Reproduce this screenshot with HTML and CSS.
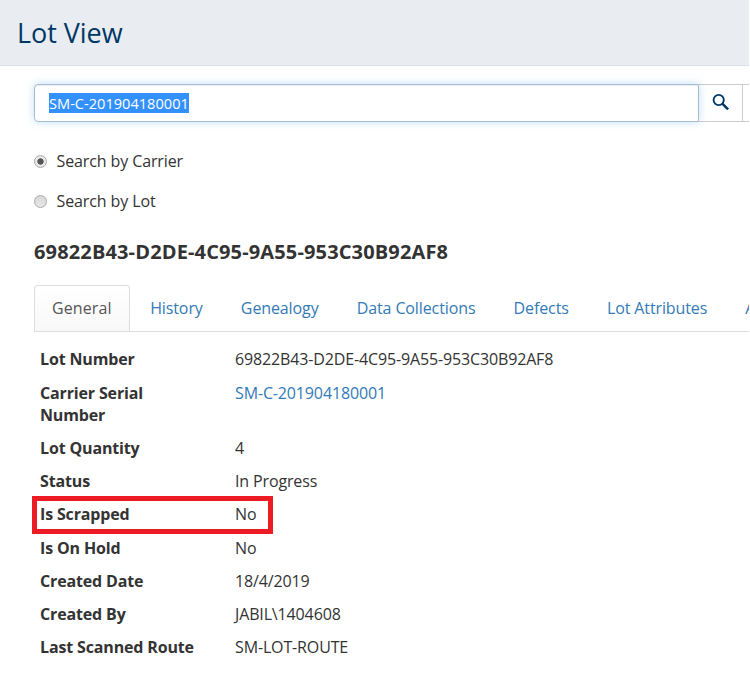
FILE: index.html
```
<!DOCTYPE html>
<html lang="en">
<head>
<meta charset="utf-8">
<title>Lot View</title>
<link rel="stylesheet" href="styles.css">
</head>
<body>
<header class="page-header"><h1>Lot View</h1></header>
<main class="content">
  <div class="search">
    <div class="search-input"><span class="selected">SM-C-201904180001</span></div>
    <button class="search-button" aria-label="Search"><svg width="18" height="18" viewBox="0 0 18 18"><circle cx="6.7" cy="7" r="5.1" fill="none" stroke="#003865" stroke-width="1.9"/><path d="M10.3 10.6 16.1 16.4" stroke="#003865" stroke-width="2.5"/></svg></button>
    <div class="search-next"></div>
  </div>
  <div class="options">
    <label class="option"><span class="radio checked"></span>Search by Carrier</label>
    <label class="option"><span class="radio"></span>Search by Lot</label>
  </div>
  <h2 class="lot-title">69822B43-D2DE-4C95-9A55-953C30B92AF8</h2>
  <nav class="tabs">
    <a class="tab active">General</a>
    <a class="tab">History</a>
    <a class="tab">Genealogy</a>
    <a class="tab">Data Collections</a>
    <a class="tab">Defects</a>
    <a class="tab">Lot Attributes</a>
    <a class="tab">A</a>
  </nav>
  <dl class="details">
    <div class="row"><dt>Lot Number</dt><dd>69822B43-D2DE-4C95-9A55-953C30B92AF8</dd></div>
    <div class="row tall"><dt>Carrier Serial Number</dt><dd class="link">SM-C-201904180001</dd></div>
    <div class="row"><dt>Lot Quantity</dt><dd>4</dd></div>
    <div class="row"><dt>Status</dt><dd>In Progress</dd></div>
    <div class="row marked"><dt>Is Scrapped</dt><dd>No</dd></div>
    <div class="row"><dt>Is On Hold</dt><dd>No</dd></div>
    <div class="row"><dt>Created Date</dt><dd>18/4/2019</dd></div>
    <div class="row"><dt>Created By</dt><dd>JABIL\1404608</dd></div>
    <div class="row"><dt>Last Scanned Route</dt><dd>SM-LOT-ROUTE</dd></div>
  </dl>
</main>
</body>
</html>
```
FILE: styles.css
```
*, *::before { box-sizing: border-box; }
html { background: #fff; }
body { margin: 0; width: 749px; height: 674px; overflow: hidden; background: #fff; color: #333; font: 400 16px/22px "Open Sans", sans-serif; letter-spacing: -.11px; }
.page-header { height: 66px; padding: 15px 17px; background: #e9ecf1; border-bottom: 1px solid #dae0e5; }
h1 { margin: 0; font-size: 27px; line-height: 36px; font-weight: 400; letter-spacing: -.05px; color: #003865; }
.content { padding: 18px 0 0 34px; }
.search { display: flex; height: 38px; }
.search-input { position: relative; width: 665px; padding: 9px 14px; border: 1px solid #a3bdd6; border-radius: 4px 0 0 4px; font-size: 14px; line-height: 20px; box-shadow: inset 0 1px 1px rgba(0,0,0,.08), 0 0 8px rgba(102,175,233,.4); }
.selected { display: block; width: 140px; height: 20px; margin-top: -1px; background: #3390ff; color: #fff; font-size: 14.6px; line-height: 21px; letter-spacing: 0; white-space: nowrap; }
.search-button { width: 44px; padding: 0; border: 1px solid #ccc; border-left: 0; background: #fff; }
.search-next { flex: 1; border: solid #ccc; border-width: 1px 0; }
.options { padding-top: 28px; }
.option { display: flex; align-items: center; height: 22px; margin-bottom: 18px; }
.radio { width: 13px; height: 13px; margin-right: 9.5px; border: 1px solid #aaa; border-radius: 50%; background: linear-gradient(#d8d8d8, #e8e8e8); }
.radio.checked { background: radial-gradient(circle, #555 0 2.8px, #e8e8e8 3.5px); }
.lot-title { margin: 28px 0 21px; font-size: 20px; line-height: 24px; font-weight: 700; letter-spacing: .14px; white-space: nowrap; }
.tabs { display: flex; height: 47px; border-bottom: 1px solid #ddd; white-space: nowrap; overflow: hidden; }
.tab { flex: none; padding: 11px 17px; border: 1px solid transparent; margin-right: 2.15px; color: #337ab7; height: 47px; }
.tab.active { width: 96px; color: #555; font-weight: 500; letter-spacing: .1px; background: linear-gradient(#fff, #f8f8f8); border-color: #ddd; border-bottom: 0; border-radius: 4px 4px 0 0; }
.details { margin: 16px 0 0 6px; }
.row { display: flex; height: 33px; position: relative; }
.row.tall { height: 55px; }
.row:first-child, .row.marked { height: 34px; }
dt { width: 195px; padding-right: 40px; font-weight: 700; letter-spacing: -.15px; }
.row:not(.tall) dt { padding-right: 0; }
dd { margin: 0; letter-spacing: -.14px; }
.link { color: #337ab7; }
.marked::before { content: ""; position: absolute; left: -8px; top: -7px; width: 241px; height: 38px; border: 5px solid #ed1c24; }
```
